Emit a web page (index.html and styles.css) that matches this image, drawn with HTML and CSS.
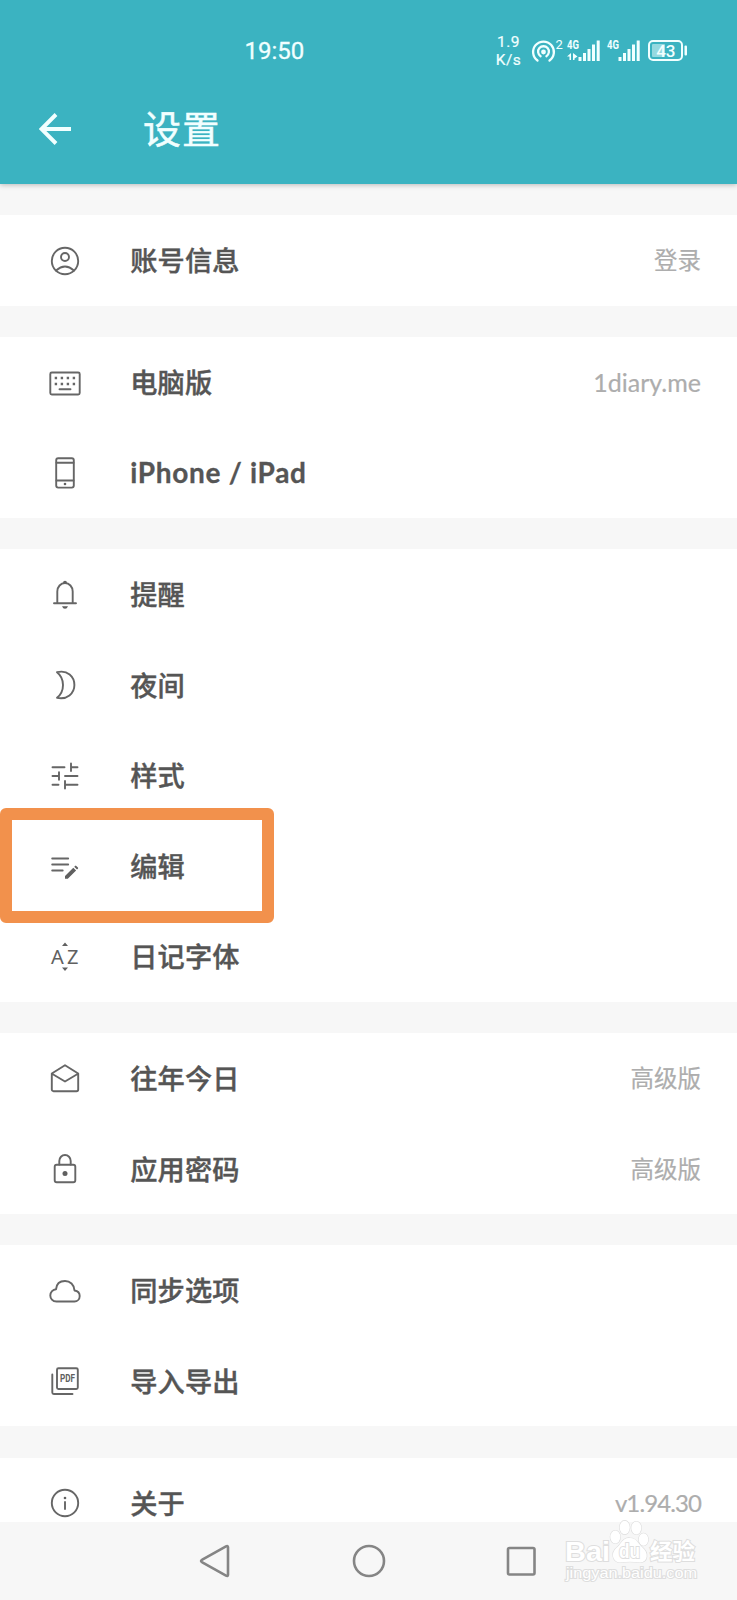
FILE: index.html
```html
<!DOCTYPE html>
<html lang="zh-CN">
<head>
<meta charset="utf-8">
<title>设置</title>
<link rel="stylesheet" href="styles.css">
</head>
<body>
<div class="screen">
  <header class="header">
    <div class="status">
      <span class="time">19:50</span>
      <div class="status-icons">
        <div class="speed"><span>1.9</span><span>K/s</span></div>
        <svg class="hotspot" width="32" height="26" viewBox="0 0 32 26" fill="none" stroke="currentColor" stroke-width="2.3" stroke-linecap="round">
          <circle cx="12.5" cy="14" r="2.4" fill="currentColor" stroke="none"/>
          <path d="M9.6 18.2a5.4 5.4 0 1 1 5.8 0M6.500 22.5a10.400 10.400 0 1 1 12 0"/>
          <text class="tiny-num" x="24.500" y="11">2</text>
        </svg>
        <svg class="signal" width="35" height="24" viewBox="0 0 35 24" fill="currentColor">
          <text class="net" x="1" y="10" textLength="12" lengthAdjust="spacingAndGlyphs">4G</text>
          <path d="M1 17.500l4-3.500v7h-1.500v-3.500zM7 21v-7l4.500 3.500-3 2v1.500z"/>
          <path d="M12.500 18h3v4h-3zM17 14h3v8h-3zM21.500 10h3v12h-3zM26 5.500h3v16.500h-3zM30.700 1.500h3v20.500h-3z"/>
        </svg>
        <svg class="signal signal-second" width="35" height="24" viewBox="0 0 35 24" fill="currentColor">
          <text class="net" x="1" y="10" textLength="12" lengthAdjust="spacingAndGlyphs">4G</text>
          <path d="M12.500 18h3v4h-3zM17 14h3v8h-3zM21.500 10h3v12h-3zM26 5.500h3v16.500h-3zM30.700 1.500h3v20.500h-3z"/>
        </svg>
        <svg class="battery" width="40" height="22" viewBox="0 0 40 22">
          <rect x="1" y="1" width="33" height="19" rx="4" fill="none" stroke="currentColor" stroke-width="2"/>
          <rect x="4" y="4" width="13" height="13" rx="1" fill="currentColor" opacity=".5"/>
          <rect x="36.500" y="5.500" width="2.500" height="10" rx="1" fill="currentColor"/>
          <text class="charge" x="17.800" y="16.500" text-anchor="middle">43</text>
        </svg>
      </div>
    </div>
    <div class="toolbar">
      <svg class="back" width="34" height="34" viewBox="0 0 34 34" fill="none" stroke="currentColor" stroke-width="3.900"><path d="M32 17H3M17 2.500L2.500 17L17 31.500"/></svg>
      <h1 class="title">设置</h1>
    </div>
  </header>

  <main class="list">
    <section class="group">
      <div class="row">
        <svg class="icon" viewBox="0 0 36 36"><circle cx="18" cy="18" r="13.200"/><circle cx="18" cy="14" r="4"/><path d="M9 27.500Q18 19.500 27 27.500"/></svg>
        <span class="label">账号信息</span><span class="value">登录</span>
      </div>
    </section>
    <section class="group">
      <div class="row">
        <svg class="icon" viewBox="0 0 36 36"><rect x="3.300" y="7.500" width="29.400" height="22" rx="1.500"/><path class="dots" d="M7.700 13h2.400M13.700 13h2.400M19.700 13h2.400M25.700 13h2.400M7.700 19h2.400M13.700 19h2.400M19.700 19h2.400M25.700 19h2.400"/><path d="M12.500 24.300h11"/></svg>
        <span class="label">电脑版</span><span class="value latin diary">1diary.me</span>
      </div>
      <div class="row">
        <svg class="icon" viewBox="0 0 36 36"><rect x="9.200" y="3.200" width="17.600" height="29.400" rx="2"/><path d="M9.500 7.800h17M9.500 25.500h17"/><circle class="solid" cx="18" cy="29" r="1.300"/></svg>
        <span class="label latin iphone">iPhone / iPad</span>
      </div>
    </section>
    <section class="group">
      <div class="row">
        <svg class="icon" viewBox="0 0 36 36"><path d="M10.300 26V14.500a7.700 8.500 0 0 1 15.400 0V26M7 26.200h22"/><path class="solid" d="M16 6.200a2 2.400 0 0 1 4 0zM15 29.200h6q-1 2.500-3 2.500t-3-2.500z"/></svg>
        <span class="label">提醒</span>
      </div>
      <div class="row">
        <svg class="icon" viewBox="0 0 36 36"><path d="M10 5.200C20.500 2.500 27.400 9.500 27.400 18S20 33 10 30.800C18 24.500 18 11.500 10 5.200z"/></svg>
        <span class="label">夜间</span>
      </div>
      <div class="row">
        <svg class="icon" viewBox="0 0 36 36"><path d="M5.500 9.200h12M24 5.500v7.500M24 9.200h6.500M5.500 18h6.500M12 14.300v7.500M18 18h12.500M5.500 26.800h6M18 23v7.500M18 26.800h12.500"/></svg>
        <span class="label">样式</span>
      </div>
      <div class="row row-marked">
        <svg class="icon" viewBox="0 0 36 36"><path d="M5.200 10.500h16M5.200 16.500h16M5.200 22.500h10.500"/><path class="solid" d="M18 28l8.300-8.300 2.800 2.800L20.800 30.800H18zM27.200 18.800l.9-.9q.6-.6 1.200 0l1.600 1.600q.6.600 0 1.200l-.9.900z"/></svg>
        <span class="label">编辑</span>
        <span class="marker"></span>
      </div>
      <div class="row">
        <svg class="icon" viewBox="0 0 36 36"><text class="az" x="4" y="25">A</text><text class="az" x="20" y="25">Z</text><path class="solid" d="M15 7l3-3.500L21 7zM15 28.500l3 3.500 3-3.500z"/></svg>
        <span class="label">日记字体</span>
      </div>
    </section>
    <section class="group">
      <div class="row">
        <svg class="icon" viewBox="0 0 36 36"><path d="M18 4.300L31.200 12.500V28.500a1.700 1.700 0 0 1-1.700 1.700H6.500a1.700 1.700 0 0 1-1.700-1.700V12.500zM5 12.800l13 7.700 13-7.700"/></svg>
        <span class="label">往年今日</span><span class="value">高级版</span>
      </div>
      <div class="row">
        <svg class="icon" viewBox="0 0 36 36"><rect x="7.700" y="13.800" width="20.600" height="17.400" rx="2"/><path d="M12.300 13.500V10a5.700 6 0 0 1 11.400 0v3.500"/><circle class="solid" cx="18" cy="22.500" r="2.500"/></svg>
        <span class="label">应用密码</span><span class="value">高级版</span>
      </div>
    </section>
    <section class="group">
      <div class="row">
        <svg class="icon" viewBox="0 0 36 36"><path d="M9.500 28.500C5.500 28.500 3.300 25.500 3.300 22.500C3.300 19 6 16.500 9 16.300C9.500 10.500 13.500 8 18 8C23 8 27.200 11.500 27.500 17.500C30.500 18 32.700 20 32.700 23C32.700 26.200 30.300 28.500 27.500 28.500z"/></svg>
        <span class="label">同步选项</span>
      </div>
      <div class="row">
        <svg class="icon" viewBox="0 0 36 36"><rect x="10" y="4.200" width="20.800" height="20.800" rx="1.500"/><path d="M5.300 10.500V28.500a1.500 1.500 0 0 0 1.500 1.500H25.500"/><text class="pdf" x="13" y="18.300" textLength="15" lengthAdjust="spacingAndGlyphs">PDF</text></svg>
        <span class="label">导入导出</span>
      </div>
    </section>
    <section class="group">
      <div class="row">
        <svg class="icon" viewBox="0 0 36 36"><circle cx="18" cy="18" r="13.200"/><path d="M18 17v7"/><circle class="solid" cx="18" cy="13" r="1.300"/></svg>
        <span class="label">关于</span><span class="value latin version">v1.94.30</span>
      </div>
    </section>
  </main>

  <nav class="nav">
    <svg width="32" height="36" viewBox="0 0 32 36"><path d="M3.300 16.600L27 3.300q2-1 2 1V31.700q0 2-2 1L3.300 19.400q-2.500-1.400 0-2.800z"/></svg>
    <svg width="36" height="36" viewBox="0 0 36 36"><circle cx="18" cy="18" r="15"/></svg>
    <svg width="32" height="32" viewBox="0 0 32 32"><rect x="3" y="3" width="26.500" height="26.500" rx="1.500"/></svg>
    <svg class="watermark" width="140" height="68" viewBox="0 0 140 68">
      <text class="wm-brand" x="5" y="42" textLength="45" lengthAdjust="spacingAndGlyphs">Bai</text>
      <ellipse cx="55.300" cy="18" rx="5" ry="6.500"/><ellipse cx="64.700" cy="8.500" rx="5" ry="6.800"/><ellipse cx="76.300" cy="9" rx="5" ry="6.500"/><ellipse cx="83.500" cy="20.500" rx="4.700" ry="6.200"/>
      <path d="M70 19C63 18 61 25 57 28.500C50 34 53 43 60 43.500Q70 42 80 43.500C88 43 89 34 82.500 28.500C78 25 77 19 70 19z"/>
      <text class="wm-du" x="59" y="39" textLength="21" lengthAdjust="spacingAndGlyphs">du</text>
      <text class="wm-cn" x="90" y="40" textLength="45" lengthAdjust="spacingAndGlyphs">经验</text>
      <text class="wm-url" x="6" y="59" textLength="131" lengthAdjust="spacingAndGlyphs">jingyan.baidu.com</text>
    </svg>
  </nav>
</div>
</body>
</html>
```
FILE: styles.css
```css
* { box-sizing: border-box; }
body { margin: 0; background: #f7f7f7; font-family: "Noto Sans CJK SC", sans-serif; }
.screen { display: flex; flex-direction: column; width: 737px; height: 1600px; overflow: hidden; }

.header { flex: none; height: 184px; background: #3bb3c1; color: #f1ffff; box-shadow: 0 1px 5px rgba(0, 0, 0, .25); z-index: 1; }
.status { display: flex; justify-content: space-between; height: 76px; padding: 25px 49.500px 0 244.500px; }
.time { font: 400 24px/53px Roboto, sans-serif; -webkit-text-stroke: .3px currentColor; }
.status-icons { display: flex; align-items: center; height: 51px; }
.speed { display: flex; flex-direction: column; width: 26px; font: 400 15.500px/18px Roboto, sans-serif; text-align: center; letter-spacing: .5px; -webkit-text-stroke: .2px currentColor; }
.hotspot { margin-left: 9px; }
.signal { margin-left: 3px; }
.signal-second { margin-left: 5px; }
.battery { margin-left: 7px; }
.tiny-num { font: 13px Roboto, sans-serif; fill: currentColor; stroke: none; }
.net { font: 700 12px Roboto, sans-serif; }
.charge { font: 500 17px Roboto, sans-serif; fill: currentColor; }
.toolbar { display: flex; align-items: center; height: 106px; padding-left: 39px; }
.title { margin: 0 0 0 70px; padding-bottom: 4px; font-size: 38px; font-weight: 400; line-height: 56px; letter-spacing: 1px; -webkit-text-stroke: .5px currentColor; }

.list { display: flex; flex-direction: column; flex: 1; gap: 31.200px; min-height: 0; padding-top: 31px; overflow: hidden; }
.group { flex: none; background: #fff; }
.row { display: flex; align-items: center; height: 90.550px; padding: 1px 36px 0 46.700px; }
.row-marked { position: relative; }
.marker { position: absolute; left: 0; top: -13px; width: 274px; height: 115px; border: 12px solid #f2914c; border-radius: 6px; }
.icon { flex: none; width: 36px; height: 36px; margin-right: 47.500px; fill: none; stroke: #666; stroke-width: 1.900; stroke-linecap: round; stroke-linejoin: round; }
.icon .solid { fill: #606060; stroke: none; }
.icon .dots { stroke-width: 2.400; stroke-linecap: butt; }
.icon .az { font: 20px "Noto Sans", sans-serif; fill: #606060; stroke: none; }
.icon .pdf { font: 700 10px Roboto, sans-serif; fill: #606060; stroke: none; }
.label { padding-bottom: 3px; font-size: 27.200px; font-weight: 500; line-height: 40px; letter-spacing: .2px; color: #555; -webkit-text-stroke: .4px currentColor; }
.value { margin-left: auto; padding-bottom: 3px; font-size: 23.500px; line-height: 34px; color: #adadad; -webkit-text-stroke: .2px currentColor; }
.latin { font-family: Lato, sans-serif; }
.iphone { padding-bottom: 2px; font-size: 28px; font-weight: 700; letter-spacing: .7px; -webkit-text-stroke: .3px currentColor; }
.diary { padding-bottom: 1px; font-size: 25px; }
.version { padding-bottom: 0; font-size: 24px; letter-spacing: -.900px; }

.nav { position: relative; display: flex; align-items: center; flex: none; height: 78px; padding: 0 0 1px 198.500px; background: #f7f7f7; fill: none; stroke: #858585; stroke-width: 2.600; }
.nav > svg:nth-child(2) { margin-left: 120px; }
.nav > svg:nth-child(3) { margin-left: 118.500px; }
.nav .watermark { position: absolute; left: 560px; top: -3px; fill: #fff; stroke: #dedede; stroke-width: 1.200; paint-order: stroke; overflow: visible; }
.wm-brand { font: 700 27px "Liberation Sans", sans-serif; stroke-width: 2; }
.wm-du { font: 700 20px "Liberation Sans", sans-serif; stroke-width: 2; }
.wm-cn { font: 700 22px "Noto Sans CJK SC", sans-serif; stroke-width: 2; }
.wm-url { font: 14px "Liberation Sans", sans-serif; stroke-width: 2; }
```
